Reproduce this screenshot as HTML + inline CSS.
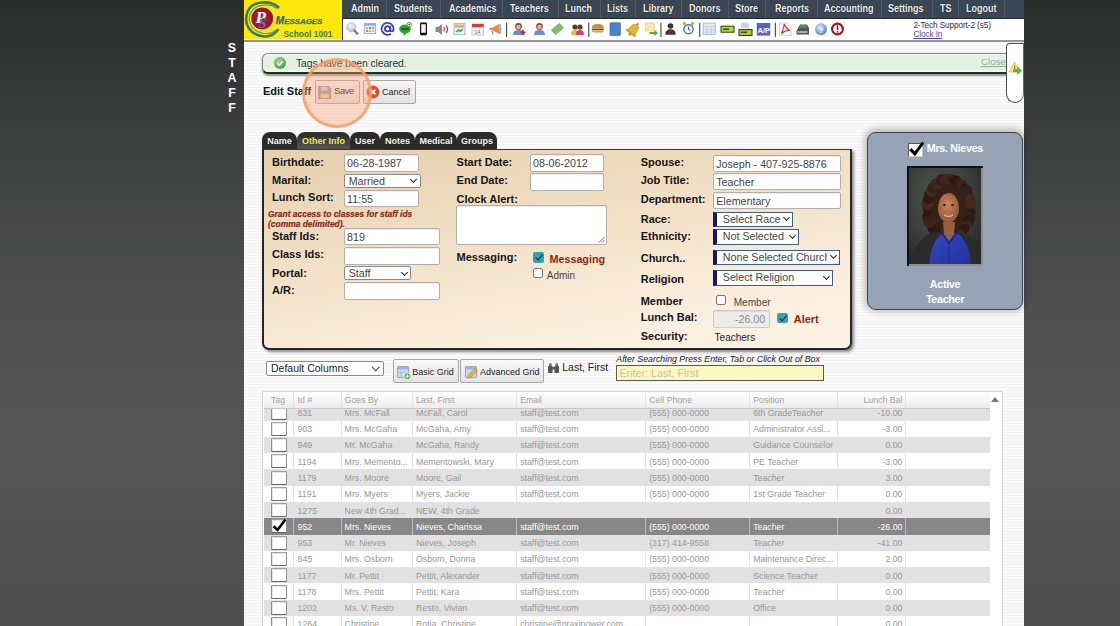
<!DOCTYPE html>
<html><head><meta charset="utf-8">
<style>
*{box-sizing:border-box}
html,body{margin:0;padding:0;width:1120px;height:626px;overflow:hidden}
body{background:linear-gradient(#2a2d2c 0%,#3f4040 24%,#505050 50%,#555555 70%,#4f4f4f 100%);font-family:"Liberation Sans",sans-serif;position:relative}
.a{position:absolute}
#main{left:244px;top:0;width:780px;height:626px;background:repeating-linear-gradient(#f2f2f2 0px,#f2f2f2 1.5px,#fafafa 1.5px,#fafafa 3px)}
#staffv{left:222px;top:41.3px;width:20px;color:#fff;font-weight:bold;font-size:12.4px;line-height:15px;text-align:center}
#logo{left:244px;top:0;width:98px;height:40px;background:linear-gradient(#fae80c 0,#fae80c 38.8px,#f8f0a0 39.5px,#f8f0a0 40px)}
#hdrline{left:244px;top:40px;width:780px;height:1.8px;background:#979797}
#menu{left:342px;top:0;width:682px;height:19px;background:#3a4654;border-bottom:1px solid #1f252c}
.mi{position:absolute;top:0;height:18px;line-height:18px;color:#eef2f4;font-weight:bold;font-size:10px;text-shadow:0 0 1px #000;white-space:nowrap}
.ms{position:absolute;top:0;width:1px;height:18px;background:#4d5a68}
#tool{left:342px;top:19px;width:682px;height:21px;background:#fff;border-left:1px solid #333}
#user{left:913.4px;top:20.8px;font-size:8.2px;letter-spacing:-0.08px;color:#2a2a58;line-height:9.6px;white-space:nowrap}
#user a{color:#4d47b3;text-decoration:underline}

.mi span{display:inline-block;transform:scaleX(.9);transform-origin:0 50%}
#notif{left:262px;top:52.8px;width:752px;height:21.3px;background:#e4f0e6;border:1.8px solid #6f8f72;border-bottom:2.3px solid #1d3321;border-radius:6px;box-shadow:0 1.5px 2px rgba(0,0,0,.4),inset 0 1px 0 #f4fff4,inset 0 -1.5px 0 #eaffea}
#notif .t{position:absolute;left:33px;top:3px;font-size:10.4px;letter-spacing:-0.12px;color:#333;line-height:14px}
#notif .ok{position:absolute;left:11px;top:3px;width:12px;height:12px;border-radius:50%;background:radial-gradient(circle at 40% 35%,#9fdc90,#48a64a 70%,#3a8a3c)}
#notif .cl{position:absolute;right:7px;top:2.5px;font-size:9.8px;color:#98ae9b;text-decoration:underline;line-height:12px}
#rtab{left:1006.3px;top:42.5px;width:18px;height:60px;background:#fff;border:1px solid #4a4a4a;border-right:1px solid #666;border-radius:4px 0 9px 9px}
#edit{left:263px;top:84.6px;font-size:11px;font-weight:bold;color:#111;line-height:13px}
.btn{position:absolute;height:24px;border:1px solid #a9a9a9;border-radius:2px;background:linear-gradient(#f6f6f6,#e2e2e2);font-size:9px;color:#222;line-height:22px;white-space:nowrap}
#circle{left:302px;top:58px;width:70px;height:70px;border-radius:50%;border:3.2px solid rgba(244,158,102,.85);background:rgba(252,160,110,.38)}
.tab{position:absolute;top:132px;height:18px;background:#2b2b2b;border-radius:8px 8px 0 0;color:#f0f0f0;font-weight:bold;font-size:9px;line-height:18.8px;text-align:center;white-space:nowrap}
#panel{left:262px;top:149.2px;width:589.5px;height:200.8px;border:2px solid #262626;border-top:1.8px solid #3e3428;border-radius:0 0 7px 7px;background:linear-gradient(170deg,#e5cfad 0%,#f3e2c8 45%,#fcefdf 80%,#fdf2e4 100%);box-shadow:2px 2px 3px rgba(0,0,0,.45)}
.lb{position:absolute;font-size:11px;font-weight:bold;color:#151515;line-height:13px;white-space:nowrap}
.in{position:absolute;height:17.3px;margin-left:-1px;margin-top:-0.6px;background:#fff;border:1px solid #b3afa8;border-radius:2px;box-shadow:inset 0 1px 1px rgba(0,0,0,.08);font-size:10.7px;color:#444;line-height:17.1px;padding-left:2.6px;white-space:nowrap;overflow:hidden}
.sel{position:absolute;height:14px;margin-left:-0.8px;margin-top:-0.3px;background:#fff;border:1px solid #8d8a86;border-radius:2px;font-size:10.7px;color:#444;line-height:12px;padding-left:4px;white-space:nowrap;overflow:hidden}
.sel:after{content:"";position:absolute;right:3.5px;top:2.5px;width:4px;height:4px;border-right:1.5px solid #222;border-bottom:1.5px solid #222;transform:rotate(45deg)}
.bsel{position:absolute;height:15.5px;margin-left:-0.6px;margin-top:-0.4px;background:#fff;border:1.5px solid #3e5e8e;border-left:4px solid #15156a;font-size:10.7px;color:#444;line-height:12px;padding-left:5.8px;white-space:nowrap;overflow:hidden}
.bsel:after{content:"";position:absolute;right:3.2px;top:2.5px;width:4px;height:4px;border-right:1.5px solid #222;border-bottom:1.5px solid #222;transform:rotate(45deg)}
.cbx{position:absolute;width:10px;height:10px;border:1px solid #777;border-radius:2px;background:#fff}
.cbt{position:absolute;width:10.5px;height:10.5px;border-radius:2px;background:#2aa6b4}
.cbt:after{content:"";position:absolute;left:3.3px;top:0.8px;width:3px;height:6px;border-right:1.6px solid #111;border-bottom:1.6px solid #111;transform:rotate(40deg)}

#card{left:867.3px;top:131.8px;width:156px;height:178.3px;background:#95a3b5;border:1.5px solid #3d434a;border-radius:9px;box-shadow:0 -1px 7px 2px rgba(0,0,0,.28)}
.wt{position:absolute;color:#fff;font-weight:bold;font-size:10.8px;letter-spacing:-0.35px;line-height:13px;white-space:nowrap;text-align:center}
#photo{left:907px;top:166px;width:76px;height:100px;background:#3c403d;border-top:2px solid #111;border-left:2px solid #111;overflow:hidden}
#dcols{left:266px;top:361.3px;width:117.5px;height:14.5px;background:#fff;border:1px solid #8d8a86;border-radius:2px;font-size:10.5px;color:#222;line-height:12.5px;padding-left:4px;white-space:nowrap}
#dcols:after{content:"";position:absolute;right:4.5px;top:1.8px;width:4.5px;height:4.5px;border-right:1.6px solid #222;border-bottom:1.6px solid #222;transform:rotate(45deg)}
.gbtn{position:absolute;top:358.9px;height:24px;border:1px solid #a5a5a5;border-radius:2px;background:linear-gradient(#f8f8f8,#e4e4e4);font-size:9px;color:#222;line-height:22px;white-space:nowrap}
#srch{left:615.7px;top:364.8px;width:208px;height:16px;background:#fdf8c2;border:1px solid #5a5a50;font-size:10.8px;color:#cbc3a3;line-height:14px;padding-left:2.5px;white-space:nowrap}
#grid{left:262.5px;top:391.3px;width:740.5px;height:240px;background:#fff;border:1px solid #d4d4d4;border-left-color:#fff;box-shadow:-1px 0 0 #d0d0d0;overflow:hidden}
.gh{position:absolute;top:0;height:17px;background:linear-gradient(#ffffff,#f6f6f6 50%,#ececec);border-bottom:1px solid #c8c8c8}
.gh span,.gr span{position:absolute;white-space:nowrap;font-size:8.75px;line-height:10px}
.gr{position:absolute;left:0;height:16.27px;width:726.5px}
.vs{position:absolute;top:0;width:1px;height:100%;background:#e2e2e2}
.tcb{position:absolute;left:7.7px;width:15.6px;height:14px;background:#fff;border:1.5px solid #8f8f8f;border-top-color:#a0a0a0;border-bottom-color:#666;border-radius:1px;box-shadow:inset 1px 1px 0 #e6e6e6}
</style></head>
<body>
<div class="a" id="main"></div>
<div class="a" id="staffv">S<br>T<br>A<br>F<br>F</div>
<div class="a" id="logo"></div>
<div class="a" id="hdrline"></div>
<div class="a" id="menu">
  <span class="mi" style="left:9px"><span>Admin</span></span>
  <span class="ms" style="left:44px"></span>
  <span class="mi" style="left:52.4px"><span>Students</span></span>
  <span class="ms" style="left:98px"></span>
  <span class="mi" style="left:106.75px"><span>Academics</span></span>
  <span class="ms" style="left:160px"></span>
  <span class="mi" style="left:168px"><span>Teachers</span></span>
  <span class="ms" style="left:216px"></span>
  <span class="mi" style="left:223px"><span>Lunch</span></span>
  <span class="ms" style="left:258px"></span>
  <span class="mi" style="left:265px"><span>Lists</span></span>
  <span class="ms" style="left:293px"></span>
  <span class="mi" style="left:301px"><span>Library</span></span>
  <span class="ms" style="left:339px"></span>
  <span class="mi" style="left:347px"><span>Donors</span></span>
  <span class="ms" style="left:386px"></span>
  <span class="mi" style="left:393px"><span>Store</span></span>
  <span class="ms" style="left:423px"></span>
  <span class="mi" style="left:433px"><span>Reports</span></span>
  <span class="ms" style="left:475px"></span>
  <span class="mi" style="left:482px"><span>Accounting</span></span>
  <span class="ms" style="left:539px"></span>
  <span class="mi" style="left:546px"><span>Settings</span></span>
  <span class="ms" style="left:590px"></span>
  <span class="mi" style="left:598px"><span>TS</span></span>
  <span class="ms" style="left:616px"></span>
  <span class="mi" style="left:624px"><span>Logout</span></span>
  <span class="ms" style="left:662px"></span>
</div>
<div class="a" id="tool"></div>

<svg class="a" style="left:0;top:0" width="1120" height="45" viewBox="0 0 1120 45">
<defs>
<radialGradient id="lens" cx="40%" cy="35%" r="65%"><stop offset="0" stop-color="#f4faff"/><stop offset="1" stop-color="#a9c6e6"/></radialGradient>
<radialGradient id="redc" cx="45%" cy="45%" r="60%"><stop offset="0" stop-color="#b1202f"/><stop offset=".85" stop-color="#9a1526"/><stop offset="1" stop-color="#c9605c"/></radialGradient>
<radialGradient id="bluec" cx="40%" cy="35%" r="65%"><stop offset="0" stop-color="#d6e6f8"/><stop offset="1" stop-color="#5b86c4"/></radialGradient>
</defs>
<!-- logo -->
<path d="M279 8 C271 0 252 0 247.5 12 C243 24 250 35 264 36.5 C270 37 275 34 278.5 29" fill="none" stroke="#3c7868" stroke-width="2.6"/>
<path d="M277 8.5 C270 3 255 3.5 250.5 13 C246.5 23 253 32 264 33.5 C269 34 273 33 276 30" fill="none" stroke="#5d9a7e" stroke-width="1.2"/>
<circle cx="262.3" cy="18.5" r="11.6" fill="#f4e89a"/><circle cx="262.3" cy="18.5" r="11" fill="url(#redc)"/>
<text x="255.5" y="22.5" font-family="Liberation Serif" font-style="italic" font-weight="bold" font-size="17" fill="#fff">P</text>
<text x="258.5" y="28.2" font-family="Liberation Serif" font-style="italic" font-weight="bold" font-size="15" fill="#5577b5">S</text>
<text x="275.5" y="24.2" font-family="Liberation Sans" font-style="italic" font-weight="bold" font-size="10.4" fill="#2f7072" stroke="#2f7072" stroke-width=".25">M<tspan font-size="7.9">ESSAGES</tspan></text>
<text x="283.5" y="36.6" font-family="Liberation Sans" font-weight="bold" font-size="8.4" fill="#3b7a66">School 1001</text>
<!-- toolbar icons -->
<circle cx="351.3" cy="27.3" r="4.6" fill="url(#lens)" stroke="#9fb9d6" stroke-width=".8"/>
<path d="M354.4 30.6 L357.3 33.6" stroke="#a27a4a" stroke-width="2.4" stroke-linecap="round"/>
<rect x="364.3" y="23.6" width="11.4" height="10" fill="#eef4fb" stroke="#8aa4c4" stroke-width=".9"/>
<rect x="364.3" y="23.6" width="11.4" height="2.2" fill="#8fb0d8"/>
<rect x="366" y="27" width="2.2" height="2" fill="#e0b24a"/><rect x="369" y="27" width="2.2" height="2" fill="#6aa86a"/><rect x="372" y="27" width="2.2" height="2" fill="#7ab0d8"/>
<rect x="366" y="30" width="2.2" height="2" fill="#d87a5a"/><rect x="369" y="30" width="2.2" height="2" fill="#e0b24a"/><rect x="372" y="30" width="2.2" height="2" fill="#e0c080"/>
<circle cx="387.6" cy="28.8" r="2.6" fill="none" stroke="#3445c2" stroke-width="1.9"/><path d="M390.3 26 v3.8 q0 1.6 1.4 1.6 q1.9 0 1.9 -2.6 a6 6 0 1 0 -2.6 5" fill="none" stroke="#3445c2" stroke-width="1.8"/>
<ellipse cx="405" cy="29" rx="5.8" ry="4.6" fill="#2ea32e"/><path d="M403 32.5 l1.2 3.3 l2.5 -3.3z" fill="#2ea32e"/>
<rect x="401.8" y="28.3" width="1.8" height="1.6" fill="#0f300f"/><rect x="404.3" y="28.3" width="1.8" height="1.6" fill="#0f300f"/><rect x="406.8" y="28.3" width="1.8" height="1.6" fill="#0f300f"/>
<circle cx="409.3" cy="24.5" r="2.2" fill="#fff" stroke="#3a8a3a" stroke-width=".8"/><path d="M408.3 24.5 h2 M409.3 23.5 v2" stroke="#222" stroke-width=".6"/>
<rect x="420" y="22.6" width="7" height="12.6" rx="1.3" fill="#111"/><rect x="421.2" y="24.2" width="4.6" height="8.6" fill="#f2f2f2"/>
<path d="M435.5 27 h2.5 l4 -3 v11 l-4 -3 h-2.5z" fill="#8a8a8a"/>
<path d="M443.8 27 q1.5 2.2 0 4.4 M446.2 25.6 q2.6 3.6 0 7.2" fill="none" stroke="#d8303a" stroke-width="1.3"/>
<rect x="454" y="23.6" width="11" height="11" fill="#e8f0f8" stroke="#9ab4d4" stroke-width=".9"/>
<rect x="455" y="24.6" width="9" height="3" fill="#f0a868"/><path d="M456 32 l2.5 -2 l2 1.2 l2.5 -2.2" stroke="#4aa050" stroke-width="1.6" fill="none"/>
<rect x="472" y="24" width="11.6" height="11" fill="#f4f4f4" stroke="#bdbdbd" stroke-width=".8"/>
<rect x="472" y="24" width="11.6" height="3.2" fill="#d73a3a"/><text x="474.2" y="33.6" font-family="Liberation Sans" font-size="5.5" fill="#777">14</text>
<path d="M489.5 28 l3 -0.5 l7 -3.5 v10 l-7 -3.5 l-3 -0.5z" fill="#e58a50"/><path d="M499.5 24 q2.5 5 0 10" fill="none" stroke="#aaa" stroke-width="1.6"/><path d="M492 31 l1 3.5" stroke="#999" stroke-width="1.4"/>
<rect x="506" y="22.8" width="1.1" height="14.2" fill="#444"/>
<circle cx="518.5" cy="26.5" r="3.4" fill="#8a5030"/><circle cx="518.5" cy="27" r="2.2" fill="#e8b890"/><path d="M513 35 q0 -5 5.5 -5 q5.5 0 5.5 5z" fill="#6b8fc9"/><path d="M520.5 32.5 h5 M523 30 v5" stroke="#e2262a" stroke-width="1.8"/>
<circle cx="539.5" cy="26.5" r="3.4" fill="#8a5030"/><circle cx="539.5" cy="27" r="2.2" fill="#e8b890"/><path d="M534 35 q0 -5 5.5 -5 q5.5 0 5.5 5z" fill="#6b8fc9"/>
<path d="M551.5 30 l8 -6.5 l4 4.5 l-8 6.5z" fill="#7cc46a" stroke="#5a9a4a" stroke-width=".7"/>
<circle cx="575" cy="27" r="2.6" fill="#5a3a2a"/><circle cx="580" cy="27" r="2.6" fill="#6a3a2a"/><path d="M571 35 q0 -5 4 -5 q4 0 4 5z" fill="#e8c020"/><path d="M576 35 q0 -5 4 -5 q4 0 4 5z" fill="#d04080"/>
<rect x="588.2" y="22.8" width="1.1" height="14.2" fill="#444"/>
<path d="M591.8 28 q0 -4 6 -4 q6 0 6 4z" fill="#c8902a"/><rect x="591.8" y="28.5" width="12" height="1.6" fill="#6a4a1a"/><path d="M591.8 30.5 h12 q0 2 -2 2 h-8 q-2 0 -2 -2z" fill="#d0a040"/>
<rect x="610" y="22.8" width="10.4" height="12.8" rx="1" fill="#4a84c8" stroke="#3a64a0" stroke-width=".7"/>
<g transform="rotate(38 633.5 29.5)"><path d="M628.5 33.5 q1 -1 1 -4 q0 -5.5 4 -6 q4 0.5 4 6 q0 3 1 4z" fill="#e6b838" stroke="#b88a20" stroke-width=".6"/><rect x="627.5" y="33.2" width="12" height="1.6" rx=".8" fill="#d09a28"/><circle cx="633.5" cy="22.6" r="1.1" fill="#b88a20"/><circle cx="633.5" cy="35.6" r="1.2" fill="#a87a20"/></g>
<rect x="645.2" y="23" width="9" height="8" fill="#f8e8a8" stroke="#e0c880" stroke-width=".6"/><path d="M649.5 32 h5 v-2.2 l3.5 3.2 l-3.5 3.2 v-2.2 h-5z" fill="#4ab040"/>
<rect x="660.4" y="22.8" width="1.1" height="14.2" fill="#444"/>
<circle cx="670.5" cy="26" r="2.8" fill="#333"/><path d="M665.3 34.8 q0 -5.5 5.2 -5.5 q5.2 0 5.2 5.5z" fill="#3a3a3a"/><path d="M670.5 29.5 v4" stroke="#d02020" stroke-width="1.2"/>
<circle cx="688.5" cy="29.2" r="5.4" fill="#4a84c8"/><circle cx="688.5" cy="29.2" r="3.8" fill="#f4f8fc"/><path d="M688.5 26.8 v2.6 l1.8 1" stroke="#333" stroke-width=".9" fill="none"/><circle cx="684.3" cy="23.6" r="1.8" fill="#e0b030"/><circle cx="692.7" cy="23.6" r="1.8" fill="#e0b030"/>
<rect x="699.2" y="22.8" width="1.1" height="14.2" fill="#444"/>
<rect x="703.2" y="23.2" width="12" height="11.4" fill="#e4eefa" stroke="#9ab4d8" stroke-width=".9"/><path d="M703.2 26.5 h12 M707.2 26.5 v8 M711.2 26.5 v8 M703.2 29.7 h12 M703.2 32.2 h12" stroke="#a8c0e0" stroke-width=".6"/>
<rect x="721" y="26.2" width="13" height="6" fill="#b8d830" stroke="#2a3a10" stroke-width="1"/><rect x="723" y="28.5" width="6" height="1.4" fill="#2a3a10"/>
<path d="M741 28 v-3.5 q0 -2 2.5 -2 h3 q2.5 0 2.5 2 v3.5z" fill="#c8d0d8"/><rect x="739" y="29.5" width="13" height="6" fill="#a8c830" stroke="#2a3a10" stroke-width="1"/><rect x="741" y="31.6" width="6" height="1.3" fill="#2a3a10"/>
<rect x="756.8" y="23" width="13.4" height="12.6" fill="#5262c8"/><text x="757.5" y="32.6" font-family="Liberation Sans" font-weight="bold" font-size="7.6" fill="#fff">A/P</text>
<rect x="774.8" y="22.8" width="1.1" height="14.2" fill="#444"/>
<path d="M779.5 22.8 h8 l3.8 3.8 v9 h-11.8z" fill="#f8f8f8" stroke="#c8c8c8" stroke-width=".7"/><path d="M781.5 33.5 q3 -8 2.5 -9.5 q1.5 4 6 6.5 q-5 -0.5 -8.5 3z" fill="none" stroke="#d42a2a" stroke-width="1.1"/>
<path d="M796.5 31 l3.5 -6.5 h7 l2 3.5 v6.5 h-12.5z" fill="#555"/><path d="M800.5 25 h6 l1.5 3 h-9z" fill="#3a9a4a"/><rect x="797.5" y="31" width="10" height="2" fill="#aaa"/>
<circle cx="821" cy="29.2" r="6" fill="url(#bluec)"/><text x="818.6" y="32.6" font-family="Liberation Sans" font-weight="bold" font-size="8" fill="#fff">?</text>
<circle cx="837.5" cy="29" r="5.4" fill="#fff" stroke="#a01818" stroke-width="2.2"/><rect x="836.7" y="25.3" width="1.6" height="4.6" fill="#a01818"/><circle cx="837.5" cy="31.8" r=".9" fill="#a01818"/>
</svg>
<div class="a" id="user">2-Tech Support-2 (s5)<br><a>Clock In</a></div>

<div class="a" id="notif"><div class="ok"><svg style="position:absolute;left:0;top:0" width="12" height="12"><path d="M3.2 6.2 L5.2 8.2 L8.8 4.2" fill="none" stroke="#fff" stroke-width="1.6"/></svg></div><div class="t">Tags have been cleared.</div><div class="cl">Close</div></div>
<div class="a" id="rtab"><svg style="position:absolute;left:0.5px;top:17.5px" width="16" height="14" viewBox="0 0 16 14"><path d="M6.5 1 L12 11 H1z" fill="#f6e68e" stroke="#d8b840" stroke-width=".8"/><rect x="6" y="4.5" width="1.2" height="3.5" fill="#a07020"/><path d="M5.5 8.5 h4 v-2.5 l4.3 3.6 l-4.3 3.6 v-2.5 h-4z" fill="#6ab858" stroke="#3a8a30" stroke-width=".5"/></svg></div>
<div class="a" id="edit">Edit Staff</div>
<div class="btn" style="left:315px;top:79.5px;width:45px"><svg style="position:absolute;left:2.2px;top:5.2px" width="13.5" height="13" viewBox="0 0 14 14"><path d="M0.5 0.5 h11 l2 2 v11 h-13z" fill="#a99ab8" stroke="#8a7a98" stroke-width=".8"/><rect x="3" y="1" width="7" height="4" fill="#d8d0e0"/><rect x="2.5" y="8.5" width="9" height="4.5" fill="#e8d890"/></svg><span style="position:absolute;left:18px;top:-0.5px;font-size:9.3px;letter-spacing:-0.3px">Save</span></div>
<div class="btn" style="left:362.5px;top:79.5px;width:53px"><svg style="position:absolute;left:2.8px;top:4.2px" width="14" height="14" viewBox="0 0 14 14"><circle cx="7" cy="7" r="6.4" fill="#e8452c"/><path d="M4.6 4.6 L9.4 9.4 M9.4 4.6 L4.6 9.4" stroke="#fff" stroke-width="1.9"/></svg><span style="position:absolute;left:18.5px;top:0">Cancel</span></div>
<div class="a" id="circle"></div>
<div class="tab" style="left:262px;width:35px">Name</div>
<div class="tab" style="left:297px;width:53px;color:#e8ee58;background:linear-gradient(#303030 20%,#5a5a5a)">Other Info</div>
<div class="tab" style="left:350px;width:30px">User</div>
<div class="tab" style="left:380px;width:35px">Notes</div>
<div class="tab" style="left:415px;width:42px">Medical</div>
<div class="tab" style="left:457px;width:40px">Groups</div>
<div class="a" id="panel"></div>
<!-- left column -->
<div class="lb" style="left:272px;top:155.5px">Birthdate:</div>
<div class="in" style="left:344.5px;top:155px;width:75.6px">06-28-1987</div>
<div class="lb" style="left:272px;top:174.3px">Marital:</div>
<div class="sel" style="left:344.5px;top:174px;width:77px">Married</div>
<div class="lb" style="left:272px;top:190.9px">Lunch Sort:</div>
<div class="in" style="left:344.5px;top:190.5px;width:75.6px">11:55</div>
<div class="a" style="left:268px;top:209.4px;font-size:8.45px;font-weight:bold;font-style:italic;color:#8a2818;line-height:10px;-webkit-text-stroke:0.2px #8a2818">Grant access to classes for staff ids<br>(comma delimited).</div>
<div class="lb" style="left:272px;top:229.7px">Staff Ids:</div>
<div class="in" style="left:344.5px;top:228.7px;width:96.6px">819</div>
<div class="lb" style="left:272px;top:248.3px">Class Ids:</div>
<div class="in" style="left:344.5px;top:248px;width:96.6px"></div>
<div class="lb" style="left:272px;top:267.1px">Portal:</div>
<div class="sel" style="left:344.5px;top:266.6px;width:67.5px">Staff</div>
<div class="lb" style="left:272px;top:283.6px">A/R:</div>
<div class="in" style="left:344.5px;top:283px;width:96.6px"></div>
<!-- middle column -->
<div class="lb" style="left:456.6px;top:155.5px">Start Date:</div>
<div class="in" style="left:530.5px;top:155px;width:74.6px">08-06-2012</div>
<div class="lb" style="left:456.6px;top:174.3px">End Date:</div>
<div class="in" style="left:530.5px;top:174px;width:74.6px"></div>
<div class="lb" style="left:456.6px;top:192.9px">Clock Alert:</div>
<div class="in" style="left:456.6px;top:205.3px;width:151.6px;height:40.5px"><svg style="position:absolute;right:1px;bottom:1px" width="7" height="7"><path d="M6.5 1 L1 6.5 M6.5 4 L4 6.5" stroke="#555" stroke-width=".9"/></svg></div>
<div class="lb" style="left:456.6px;top:251px">Messaging:</div>
<div class="cbt" style="left:533.4px;top:252.4px"></div>
<div class="a" style="left:549.5px;top:252.6px;font-size:10.75px;font-weight:bold;color:#951f10;line-height:13px">Messaging</div>
<div class="cbx" style="left:533.4px;top:267.9px"></div>
<div class="a" style="left:546.8px;top:268.5px;font-size:10px;color:#444;line-height:13px">Admin</div>
<!-- right column -->
<div class="lb" style="left:640.7px;top:155.7px">Spouse:</div>
<div class="in" style="left:713.6px;top:155.5px;width:128.1px">Joseph - 407-925-8876</div>
<div class="lb" style="left:640.7px;top:174.2px">Job Title:</div>
<div class="in" style="left:713.6px;top:174px;width:128.1px;height:16.5px">Teacher</div>
<div class="lb" style="left:640.7px;top:193.3px">Department:</div>
<div class="in" style="left:713.6px;top:192.7px;width:128.1px;height:17px">Elementary</div>
<div class="lb" style="left:640.7px;top:212.6px">Race:</div>
<div class="bsel" style="left:713.6px;top:212.2px;width:80.3px">Select Race</div>
<div class="lb" style="left:640.7px;top:230px">Ethnicity:</div>
<div class="bsel" style="left:713.6px;top:229.7px;width:86.4px">Not Selected</div>
<div class="lb" style="left:640.7px;top:251.9px">Church..</div>
<div class="bsel" style="left:713.6px;top:250.3px;width:127px"><span style="display:block;overflow:hidden;margin-right:12px">None Selected Church</span></div>
<div class="lb" style="left:640.7px;top:273px">Religion</div>
<div class="bsel" style="left:713.6px;top:270.8px;width:119.7px">Select Religion</div>
<div class="lb" style="left:640.7px;top:294.6px">Member</div>
<div class="cbx" style="left:716.2px;top:295.2px"></div>
<div class="a" style="left:733.7px;top:295.5px;font-size:10.1px;color:#444;line-height:13px">Member</div>
<div class="lb" style="left:640.7px;top:310.8px">Lunch Bal:</div>
<div class="in" style="left:713.6px;top:310.8px;width:57.6px;height:17.5px;background:#eeece8;border-color:#cfccc6;color:#888;text-align:right;padding-right:4px;line-height:16px">-26.00</div>
<div class="cbt" style="left:777.4px;top:312.8px"></div>
<div class="a" style="left:793.7px;top:313.1px;font-size:11px;font-weight:bold;color:#951f10;line-height:13px">Alert</div>
<div class="lb" style="left:640.7px;top:330.3px">Security:</div>
<div class="a" style="left:714.6px;top:330.8px;font-size:10px;color:#222;line-height:13px">Teachers</div>

<div class="a" id="card"></div>
<div class="a" style="left:908.3px;top:143.2px;width:15px;height:14px;background:#fff;border:1.5px solid #555;border-right-color:#ccc;border-bottom-color:#ccc"></div>
<svg class="a" style="left:906px;top:139px" width="22" height="20" viewBox="0 0 22 20"><path d="M3.2 11.3 L5.6 9 L8.6 12.4 L16.2 2.4 L18.2 4.4 L9 17.2z" fill="#000"/></svg>
<div class="wt" style="left:926.8px;top:141.8px">Mrs. Nieves</div>
<div class="a" id="photo"><svg width="74" height="98" viewBox="0 0 74 98" style="position:absolute;left:0;top:0">
<defs><radialGradient id="pbg" cx="40%" cy="30%" r="75%"><stop offset="0" stop-color="#4f5550"/><stop offset=".6" stop-color="#3a3f3b"/><stop offset="1" stop-color="#262a27"/></radialGradient>
<radialGradient id="skin" cx="45%" cy="40%" r="60%"><stop offset="0" stop-color="#c7875e"/><stop offset="1" stop-color="#8f5638"/></radialGradient>
<linearGradient id="shirt" x1="0" y1="0" x2="1" y2="1"><stop offset="0" stop-color="#3448c0"/><stop offset="1" stop-color="#23309a"/></linearGradient></defs>
<rect width="74" height="98" fill="url(#pbg)"/>
<ellipse cx="40" cy="43" rx="21" ry="28" fill="#35201a"/>
<circle cx="62.0" cy="40.0" r="4.6" fill="#3e2519"/>
<circle cx="61.7" cy="44.5" r="4.9" fill="#2c1b14"/>
<circle cx="60.9" cy="49.0" r="5.6" fill="#35201a"/>
<circle cx="59.6" cy="53.2" r="5.5" fill="#2c1b14"/>
<circle cx="57.8" cy="57.0" r="4.6" fill="#3e2519"/>
<circle cx="55.6" cy="60.5" r="4.5" fill="#2c1b14"/>
<circle cx="52.9" cy="63.5" r="5.4" fill="#2c1b14"/>
<circle cx="50.0" cy="65.8" r="5.0" fill="#3e2519"/>
<circle cx="46.8" cy="66.5" r="4.6" fill="#3e2519"/>
<circle cx="43.4" cy="66.8" r="6.2" fill="#2c1b14"/>
<circle cx="40.0" cy="66.9" r="5.9" fill="#35201a"/>
<circle cx="36.6" cy="66.8" r="4.4" fill="#35201a"/>
<circle cx="33.2" cy="66.5" r="4.8" fill="#35201a"/>
<circle cx="30.0" cy="65.8" r="6.1" fill="#46291b"/>
<circle cx="27.1" cy="63.5" r="5.2" fill="#2c1b14"/>
<circle cx="24.4" cy="60.5" r="5.8" fill="#2c1b14"/>
<circle cx="22.2" cy="57.0" r="5.0" fill="#2c1b14"/>
<circle cx="20.4" cy="53.2" r="6.4" fill="#3e2519"/>
<circle cx="19.1" cy="49.0" r="6.2" fill="#35201a"/>
<circle cx="18.3" cy="44.5" r="4.1" fill="#2c1b14"/>
<circle cx="18.0" cy="40.0" r="4.5" fill="#2c1b14"/>
<circle cx="18.3" cy="35.5" r="5.9" fill="#46291b"/>
<circle cx="19.1" cy="31.0" r="5.1" fill="#2c1b14"/>
<circle cx="20.4" cy="26.8" r="5.4" fill="#2c1b14"/>
<circle cx="22.2" cy="23.0" r="5.5" fill="#46291b"/>
<circle cx="24.4" cy="19.5" r="5.7" fill="#35201a"/>
<circle cx="27.1" cy="16.5" r="6.1" fill="#3e2519"/>
<circle cx="30.0" cy="14.2" r="5.7" fill="#46291b"/>
<circle cx="33.2" cy="12.4" r="6.4" fill="#35201a"/>
<circle cx="36.6" cy="11.4" r="5.8" fill="#3e2519"/>
<circle cx="40.0" cy="11.0" r="5.6" fill="#46291b"/>
<circle cx="43.4" cy="11.4" r="4.7" fill="#35201a"/>
<circle cx="46.8" cy="12.4" r="5.2" fill="#2c1b14"/>
<circle cx="50.0" cy="14.2" r="4.2" fill="#35201a"/>
<circle cx="52.9" cy="16.5" r="5.0" fill="#3e2519"/>
<circle cx="55.6" cy="19.5" r="4.1" fill="#2c1b14"/>
<circle cx="57.8" cy="23.0" r="5.9" fill="#35201a"/>
<circle cx="59.6" cy="26.8" r="4.1" fill="#35201a"/>
<circle cx="60.9" cy="31.0" r="4.9" fill="#46291b"/>
<circle cx="61.7" cy="35.5" r="5.4" fill="#46291b"/>
<path d="M2 98 C4 80 12 68 24 64 L54 64 C64 68 70 80 72 98z" fill="#2b2b2d"/>
<path d="M20 98 C21 82 26 70 34 65 L48 65 C56 70 61 82 62 98z" fill="url(#shirt)"/>
<path d="M34 54 L46 54 L45 66 L40 73 L35 66z" fill="#9a6040"/>
<path d="M32 64 L40 75 L49 64" stroke="#1a2678" stroke-width="1.3" fill="none"/>
<path d="M40 75 V98" stroke="#1e2a88" stroke-width=".8"/>
<ellipse cx="39.5" cy="40" rx="10.5" ry="15" fill="url(#skin)"/>
<path d="M35 47 q4.5 2.8 9 0" stroke="#d8b8a4" stroke-width="1.2" fill="none"/>
<ellipse cx="35.5" cy="37" rx="1.5" ry=".9" fill="#2a1a12"/><ellipse cx="43.5" cy="37" rx="1.5" ry=".9" fill="#2a1a12"/>
<path d="M28 33 C29 22 35 20 40 21 C46 20 51 24 51 33 C49 26 44 24 40 25 C34 25 30 28 28 33z" fill="#35201a"/>
<rect x="72" y="0" width="2" height="98" fill="#8e8e8e"/><rect x="0" y="96" width="74" height="2" fill="#8e8e8e"/>
</svg></div>
<div class="wt" style="left:895px;top:277.8px;width:100px">Active<br><span style="position:relative;top:2px">Teacher</span></div>
<div class="a" id="dcols">Default Columns</div>
<div class="gbtn" style="left:393px;width:65.5px"><svg style="position:absolute;left:3.2px;top:6.2px" width="14" height="14" viewBox="0 0 15 15"><rect x=".5" y=".5" width="12" height="12" rx="1.5" fill="#c9d8ea" stroke="#7f95b2" stroke-width=".9"/><rect x=".5" y=".5" width="12" height="3" fill="#9fb4d0"/><path d="M4.5 3.5 v9 M.5 7 h12" stroke="#9fb4d0" stroke-width=".7"/><circle cx="11" cy="11" r="3.6" fill="#4cae4c" stroke="#fff" stroke-width=".8"/><path d="M9 11 h4 M11 9 v4" stroke="#fff" stroke-width="1.1"/></svg><span style="position:absolute;left:18.2px;top:1px">Basic Grid</span></div>
<div class="gbtn" style="left:460.4px;width:83.7px"><svg style="position:absolute;left:3.8px;top:6.2px" width="14" height="14" viewBox="0 0 15 15"><rect x=".5" y=".5" width="12" height="12" rx="1.5" fill="#c9d8ea" stroke="#7f95b2" stroke-width=".9"/><rect x=".5" y=".5" width="12" height="3" fill="#9fb4d0"/><path d="M3 13 l1 -3.5 l7 -7 l2.5 2.5 l-7 7z" fill="#e8b040" stroke="#b07820" stroke-width=".6"/></svg><span style="position:absolute;left:18.7px;top:1px">Advanced Grid</span></div>
<svg class="a" style="left:548px;top:362.5px" width="11" height="10" viewBox="0 0 11 10"><rect x="0" y="3" width="4.6" height="7" rx=".8" fill="#555"/><rect x="6.4" y="3" width="4.6" height="7" rx=".8" fill="#555"/><rect x="1" y="0.5" width="2.6" height="3" fill="#666"/><rect x="7.4" y="0.5" width="2.6" height="3" fill="#666"/><rect x="4" y="4" width="3" height="2.5" fill="#555"/></svg>
<div class="a" style="left:562.3px;top:361px;font-size:10.45px;color:#1a1a1a;line-height:13px;white-space:nowrap">Last, First</div>
<div class="a" style="left:616.3px;top:354px;font-size:8.8px;font-style:italic;color:#222;line-height:11px;white-space:nowrap">After Searching Press Enter, Tab or Click Out of Box</div>
<div class="a" id="srch">Enter: Last, First</div>
<div class="a" id="grid">
<div class="gr" style="top:12.10px;background:#e1e1e1;color:#979797">
<div class="vs" style="left:29.2px;background:#e1e1e1"></div>
<div class="vs" style="left:77.0px;background:#e1e1e1"></div>
<div class="vs" style="left:148.3px;background:#e1e1e1"></div>
<div class="vs" style="left:252.5px;background:#e1e1e1"></div>
<div class="vs" style="left:381.3px;background:#e1e1e1"></div>
<div class="vs" style="left:485.6px;background:#e1e1e1"></div>
<div class="vs" style="left:573.4px;background:#e1e1e1"></div>
<div class="vs" style="left:641.0px;background:#e1e1e1"></div>
<div class="tcb" style="top:1.2px"></div>
<span style="left:34.1px;top:3.5px">831</span>
<span style="left:81.1px;top:3.5px">Mrs. McFall</span>
<span style="left:152.5px;top:3.5px">McFall, Carol</span>
<span style="left:256.7px;top:3.5px">staff@test.com</span>
<span style="left:385.7px;top:3.5px">(555) 000-0000</span>
<span style="left:489.7px;top:3.5px">6th GradeTeacher</span>
<span style="right:87.6px;top:3.5px">-10.00</span>
</div>
<div class="gr" style="top:28.37px;background:#ffffff;color:#979797">
<div class="vs" style="left:29.2px;background:#e4e4e4"></div>
<div class="vs" style="left:77.0px;background:#e4e4e4"></div>
<div class="vs" style="left:148.3px;background:#e4e4e4"></div>
<div class="vs" style="left:252.5px;background:#e4e4e4"></div>
<div class="vs" style="left:381.3px;background:#e4e4e4"></div>
<div class="vs" style="left:485.6px;background:#e4e4e4"></div>
<div class="vs" style="left:573.4px;background:#e4e4e4"></div>
<div class="vs" style="left:641.0px;background:#e4e4e4"></div>
<div class="tcb" style="top:1.2px"></div>
<span style="left:34.1px;top:3.5px">903</span>
<span style="left:81.1px;top:3.5px">Mrs. McGaha</span>
<span style="left:152.5px;top:3.5px">McGaha, Amy</span>
<span style="left:256.7px;top:3.5px">staff@test.com</span>
<span style="left:385.7px;top:3.5px">(555) 000-0000</span>
<span style="left:489.7px;top:3.5px">Administrator Assi...</span>
<span style="right:87.6px;top:3.5px">-3.00</span>
</div>
<div class="gr" style="top:44.64px;background:#e1e1e1;color:#979797">
<div class="vs" style="left:29.2px;background:#e1e1e1"></div>
<div class="vs" style="left:77.0px;background:#e1e1e1"></div>
<div class="vs" style="left:148.3px;background:#e1e1e1"></div>
<div class="vs" style="left:252.5px;background:#e1e1e1"></div>
<div class="vs" style="left:381.3px;background:#e1e1e1"></div>
<div class="vs" style="left:485.6px;background:#e1e1e1"></div>
<div class="vs" style="left:573.4px;background:#e1e1e1"></div>
<div class="vs" style="left:641.0px;background:#e1e1e1"></div>
<div class="tcb" style="top:1.2px"></div>
<span style="left:34.1px;top:3.5px">949</span>
<span style="left:81.1px;top:3.5px">Mr. McGaha</span>
<span style="left:152.5px;top:3.5px">McGaha, Randy</span>
<span style="left:256.7px;top:3.5px">staff@test.com</span>
<span style="left:385.7px;top:3.5px">(555) 000-0000</span>
<span style="left:489.7px;top:3.5px">Guidance Counselor</span>
<span style="right:87.6px;top:3.5px">0.00</span>
</div>
<div class="gr" style="top:60.91px;background:#ffffff;color:#979797">
<div class="vs" style="left:29.2px;background:#e4e4e4"></div>
<div class="vs" style="left:77.0px;background:#e4e4e4"></div>
<div class="vs" style="left:148.3px;background:#e4e4e4"></div>
<div class="vs" style="left:252.5px;background:#e4e4e4"></div>
<div class="vs" style="left:381.3px;background:#e4e4e4"></div>
<div class="vs" style="left:485.6px;background:#e4e4e4"></div>
<div class="vs" style="left:573.4px;background:#e4e4e4"></div>
<div class="vs" style="left:641.0px;background:#e4e4e4"></div>
<div class="tcb" style="top:1.2px"></div>
<span style="left:34.1px;top:3.5px">1194</span>
<span style="left:81.1px;top:3.5px">Mrs. Memento...</span>
<span style="left:152.5px;top:3.5px">Mementowski, Mary</span>
<span style="left:256.7px;top:3.5px">staff@test.com</span>
<span style="left:385.7px;top:3.5px">(555) 000-0000</span>
<span style="left:489.7px;top:3.5px">PE Teacher</span>
<span style="right:87.6px;top:3.5px">-3.00</span>
</div>
<div class="gr" style="top:77.18px;background:#e1e1e1;color:#979797">
<div class="vs" style="left:29.2px;background:#e1e1e1"></div>
<div class="vs" style="left:77.0px;background:#e1e1e1"></div>
<div class="vs" style="left:148.3px;background:#e1e1e1"></div>
<div class="vs" style="left:252.5px;background:#e1e1e1"></div>
<div class="vs" style="left:381.3px;background:#e1e1e1"></div>
<div class="vs" style="left:485.6px;background:#e1e1e1"></div>
<div class="vs" style="left:573.4px;background:#e1e1e1"></div>
<div class="vs" style="left:641.0px;background:#e1e1e1"></div>
<div class="tcb" style="top:1.2px"></div>
<span style="left:34.1px;top:3.5px">1179</span>
<span style="left:81.1px;top:3.5px">Mrs. Moore</span>
<span style="left:152.5px;top:3.5px">Moore, Gail</span>
<span style="left:256.7px;top:3.5px">staff@test.com</span>
<span style="left:385.7px;top:3.5px">(555) 000-0000</span>
<span style="left:489.7px;top:3.5px">Teacher</span>
<span style="right:87.6px;top:3.5px">3.00</span>
</div>
<div class="gr" style="top:93.45px;background:#ffffff;color:#979797">
<div class="vs" style="left:29.2px;background:#e4e4e4"></div>
<div class="vs" style="left:77.0px;background:#e4e4e4"></div>
<div class="vs" style="left:148.3px;background:#e4e4e4"></div>
<div class="vs" style="left:252.5px;background:#e4e4e4"></div>
<div class="vs" style="left:381.3px;background:#e4e4e4"></div>
<div class="vs" style="left:485.6px;background:#e4e4e4"></div>
<div class="vs" style="left:573.4px;background:#e4e4e4"></div>
<div class="vs" style="left:641.0px;background:#e4e4e4"></div>
<div class="tcb" style="top:1.2px"></div>
<span style="left:34.1px;top:3.5px">1191</span>
<span style="left:81.1px;top:3.5px">Mrs. Myers</span>
<span style="left:152.5px;top:3.5px">Myers, Jackie</span>
<span style="left:256.7px;top:3.5px">staff@test.com</span>
<span style="left:385.7px;top:3.5px">(555) 000-0000</span>
<span style="left:489.7px;top:3.5px">1st Grade Teacher</span>
<span style="right:87.6px;top:3.5px">0.00</span>
</div>
<div class="gr" style="top:109.72px;background:#e1e1e1;color:#979797">
<div class="vs" style="left:29.2px;background:#e1e1e1"></div>
<div class="vs" style="left:77.0px;background:#e1e1e1"></div>
<div class="vs" style="left:148.3px;background:#e1e1e1"></div>
<div class="vs" style="left:252.5px;background:#e1e1e1"></div>
<div class="vs" style="left:381.3px;background:#e1e1e1"></div>
<div class="vs" style="left:485.6px;background:#e1e1e1"></div>
<div class="vs" style="left:573.4px;background:#e1e1e1"></div>
<div class="vs" style="left:641.0px;background:#e1e1e1"></div>
<div class="tcb" style="top:1.2px"></div>
<span style="left:34.1px;top:3.5px">1275</span>
<span style="left:81.1px;top:3.5px">New 4th Grad...</span>
<span style="left:152.5px;top:3.5px">NEW, 4th Grade</span>
<span style="right:87.6px;top:3.5px">0.00</span>
</div>
<div class="gr" style="top:125.99px;background:#878787;color:#ffffff">
<div class="vs" style="left:29.2px;background:#b9b9b9"></div>
<div class="vs" style="left:77.0px;background:#b9b9b9"></div>
<div class="vs" style="left:148.3px;background:#b9b9b9"></div>
<div class="vs" style="left:252.5px;background:#b9b9b9"></div>
<div class="vs" style="left:381.3px;background:#b9b9b9"></div>
<div class="vs" style="left:485.6px;background:#b9b9b9"></div>
<div class="vs" style="left:573.4px;background:#b9b9b9"></div>
<div class="vs" style="left:641.0px;background:#b9b9b9"></div>
<div class="tcb" style="top:1.2px"></div>
<svg style="position:absolute;left:8px;top:-1px" width="16" height="17" viewBox="0 0 16 17"><path d="M0.5 10.2 L2.6 8.2 L5.4 11 L12.4 1.8 L14.2 3.6 L5.8 14.8z" fill="#000"/></svg>
<span style="left:34.1px;top:3.5px">952</span>
<span style="left:81.1px;top:3.5px">Mrs. Nieves</span>
<span style="left:152.5px;top:3.5px">Nieves, Charissa</span>
<span style="left:256.7px;top:3.5px">staff@test.com</span>
<span style="left:385.7px;top:3.5px">(555) 000-0000</span>
<span style="left:489.7px;top:3.5px">Teacher</span>
<span style="right:87.6px;top:3.5px">-26.00</span>
</div>
<div class="gr" style="top:142.26px;background:#e1e1e1;color:#979797">
<div class="vs" style="left:29.2px;background:#e1e1e1"></div>
<div class="vs" style="left:77.0px;background:#e1e1e1"></div>
<div class="vs" style="left:148.3px;background:#e1e1e1"></div>
<div class="vs" style="left:252.5px;background:#e1e1e1"></div>
<div class="vs" style="left:381.3px;background:#e1e1e1"></div>
<div class="vs" style="left:485.6px;background:#e1e1e1"></div>
<div class="vs" style="left:573.4px;background:#e1e1e1"></div>
<div class="vs" style="left:641.0px;background:#e1e1e1"></div>
<div class="tcb" style="top:1.2px"></div>
<span style="left:34.1px;top:3.5px">953</span>
<span style="left:81.1px;top:3.5px">Mr. Nieves</span>
<span style="left:152.5px;top:3.5px">Nieves, Joseph</span>
<span style="left:256.7px;top:3.5px">staff@test.com</span>
<span style="left:385.7px;top:3.5px">(317) 414-9558</span>
<span style="left:489.7px;top:3.5px">Teacher</span>
<span style="right:87.6px;top:3.5px">-41.00</span>
</div>
<div class="gr" style="top:158.53px;background:#ffffff;color:#979797">
<div class="vs" style="left:29.2px;background:#e4e4e4"></div>
<div class="vs" style="left:77.0px;background:#e4e4e4"></div>
<div class="vs" style="left:148.3px;background:#e4e4e4"></div>
<div class="vs" style="left:252.5px;background:#e4e4e4"></div>
<div class="vs" style="left:381.3px;background:#e4e4e4"></div>
<div class="vs" style="left:485.6px;background:#e4e4e4"></div>
<div class="vs" style="left:573.4px;background:#e4e4e4"></div>
<div class="vs" style="left:641.0px;background:#e4e4e4"></div>
<div class="tcb" style="top:1.2px"></div>
<span style="left:34.1px;top:3.5px">845</span>
<span style="left:81.1px;top:3.5px">Mrs. Osborn</span>
<span style="left:152.5px;top:3.5px">Osborn, Donna</span>
<span style="left:256.7px;top:3.5px">staff@test.com</span>
<span style="left:385.7px;top:3.5px">(555) 000-0000</span>
<span style="left:489.7px;top:3.5px">Maintenance Direc...</span>
<span style="right:87.6px;top:3.5px">2.00</span>
</div>
<div class="gr" style="top:174.80px;background:#e1e1e1;color:#979797">
<div class="vs" style="left:29.2px;background:#e1e1e1"></div>
<div class="vs" style="left:77.0px;background:#e1e1e1"></div>
<div class="vs" style="left:148.3px;background:#e1e1e1"></div>
<div class="vs" style="left:252.5px;background:#e1e1e1"></div>
<div class="vs" style="left:381.3px;background:#e1e1e1"></div>
<div class="vs" style="left:485.6px;background:#e1e1e1"></div>
<div class="vs" style="left:573.4px;background:#e1e1e1"></div>
<div class="vs" style="left:641.0px;background:#e1e1e1"></div>
<div class="tcb" style="top:1.2px"></div>
<span style="left:34.1px;top:3.5px">1177</span>
<span style="left:81.1px;top:3.5px">Mr. Pettit</span>
<span style="left:152.5px;top:3.5px">Pettit, Alexander</span>
<span style="left:256.7px;top:3.5px">staff@test.com</span>
<span style="left:385.7px;top:3.5px">(555) 000-0000</span>
<span style="left:489.7px;top:3.5px">Science Teacher</span>
<span style="right:87.6px;top:3.5px">0.00</span>
</div>
<div class="gr" style="top:191.07px;background:#ffffff;color:#979797">
<div class="vs" style="left:29.2px;background:#e4e4e4"></div>
<div class="vs" style="left:77.0px;background:#e4e4e4"></div>
<div class="vs" style="left:148.3px;background:#e4e4e4"></div>
<div class="vs" style="left:252.5px;background:#e4e4e4"></div>
<div class="vs" style="left:381.3px;background:#e4e4e4"></div>
<div class="vs" style="left:485.6px;background:#e4e4e4"></div>
<div class="vs" style="left:573.4px;background:#e4e4e4"></div>
<div class="vs" style="left:641.0px;background:#e4e4e4"></div>
<div class="tcb" style="top:1.2px"></div>
<span style="left:34.1px;top:3.5px">1178</span>
<span style="left:81.1px;top:3.5px">Mrs. Pettit</span>
<span style="left:152.5px;top:3.5px">Pettit, Kara</span>
<span style="left:256.7px;top:3.5px">staff@test.com</span>
<span style="left:385.7px;top:3.5px">(555) 000-0000</span>
<span style="left:489.7px;top:3.5px">Teacher</span>
<span style="right:87.6px;top:3.5px">0.00</span>
</div>
<div class="gr" style="top:207.34px;background:#e1e1e1;color:#979797">
<div class="vs" style="left:29.2px;background:#e1e1e1"></div>
<div class="vs" style="left:77.0px;background:#e1e1e1"></div>
<div class="vs" style="left:148.3px;background:#e1e1e1"></div>
<div class="vs" style="left:252.5px;background:#e1e1e1"></div>
<div class="vs" style="left:381.3px;background:#e1e1e1"></div>
<div class="vs" style="left:485.6px;background:#e1e1e1"></div>
<div class="vs" style="left:573.4px;background:#e1e1e1"></div>
<div class="vs" style="left:641.0px;background:#e1e1e1"></div>
<div class="tcb" style="top:1.2px"></div>
<span style="left:34.1px;top:3.5px">1202</span>
<span style="left:81.1px;top:3.5px">Ms. V. Resto</span>
<span style="left:152.5px;top:3.5px">Resto, Vivian</span>
<span style="left:256.7px;top:3.5px">staff@test.com</span>
<span style="left:385.7px;top:3.5px">(555) 000-0000</span>
<span style="left:489.7px;top:3.5px">Office</span>
<span style="right:87.6px;top:3.5px">0.00</span>
</div>
<div class="gr" style="top:223.61px;background:#ffffff;color:#979797">
<div class="vs" style="left:29.2px;background:#e4e4e4"></div>
<div class="vs" style="left:77.0px;background:#e4e4e4"></div>
<div class="vs" style="left:148.3px;background:#e4e4e4"></div>
<div class="vs" style="left:252.5px;background:#e4e4e4"></div>
<div class="vs" style="left:381.3px;background:#e4e4e4"></div>
<div class="vs" style="left:485.6px;background:#e4e4e4"></div>
<div class="vs" style="left:573.4px;background:#e4e4e4"></div>
<div class="vs" style="left:641.0px;background:#e4e4e4"></div>
<div class="tcb" style="top:1.2px"></div>
<span style="left:34.1px;top:3.5px">1264</span>
<span style="left:81.1px;top:3.5px">Christine</span>
<span style="left:152.5px;top:3.5px">Rotia, Christine</span>
<span style="left:256.7px;top:3.5px">christine@praxipower.com</span>
<span style="right:87.6px;top:3.5px">0.00</span>
</div>
<div class="gh" style="left:0;width:726.5px;color:#a0a0a0">
<div class="vs" style="left:29.2px;background:#e6e6e6"></div>
<div class="vs" style="left:77.0px;background:#e6e6e6"></div>
<div class="vs" style="left:148.3px;background:#e6e6e6"></div>
<div class="vs" style="left:252.5px;background:#e6e6e6"></div>
<div class="vs" style="left:381.3px;background:#e6e6e6"></div>
<div class="vs" style="left:485.6px;background:#e6e6e6"></div>
<div class="vs" style="left:573.4px;background:#e6e6e6"></div>
<div class="vs" style="left:641.0px;background:#e6e6e6"></div>
<span style="left:7.4px;top:3px">Tag</span>
<span style="left:34.1px;top:3px">Id #</span>
<span style="left:81.1px;top:3px">Goes By</span>
<span style="left:152.5px;top:3px">Last, First</span>
<span style="left:256.7px;top:3px">Email</span>
<span style="left:385.7px;top:3px">Cell Phone</span>
<span style="left:489.7px;top:3px">Position</span>
<span style="right:87.6px;top:3px">Lunch Bal</span>
</div>
<div style="position:absolute;left:727.5px;top:4.8px;width:0;height:0;border-left:4px solid transparent;border-right:4px solid transparent;border-bottom:5.5px solid #777"></div>
</div>
</body></html>
